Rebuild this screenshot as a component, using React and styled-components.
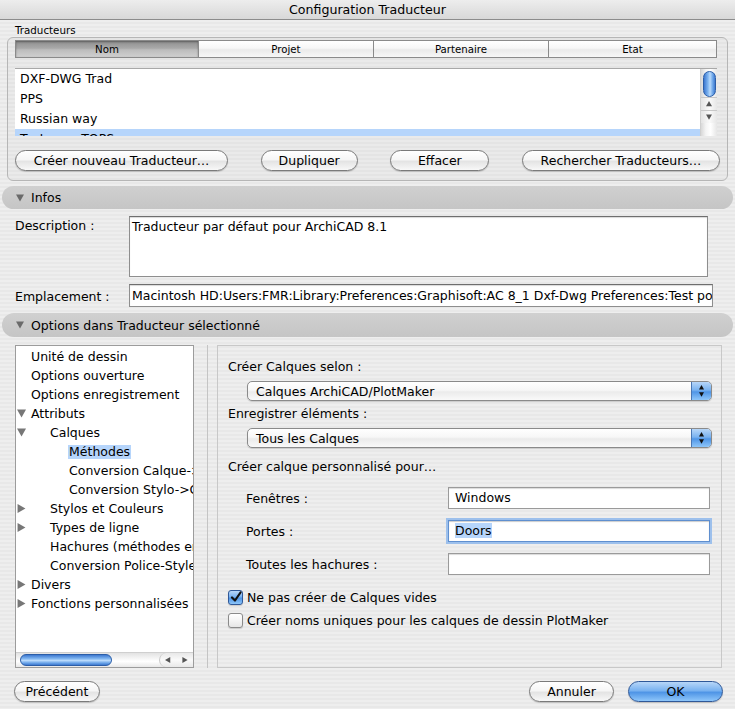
import styled, { createGlobalStyle } from 'styled-components';

const GlobalStyle = createGlobalStyle`
  html, body { margin: 0; padding: 0; }
  body {
    font-family: "DejaVu Sans", "Liberation Sans", sans-serif;
    font-size: 12.5px;
    color: #000;
    background: #ececec;
  }
  * { box-sizing: border-box; }
`;

const Window = styled.div`
  width: 735px;
  height: 709px;
  display: flex;
  flex-direction: column;
  overflow: hidden;
  background: repeating-linear-gradient(to bottom, #eeeeee 0 2px, #e8e8e8 2px 4px);
`;

const TitleBar = styled.div`
  height: 20px;
  flex: none;
  display: flex;
  align-items: center;
  justify-content: center;
  padding-bottom: 1px;
  font-size: 12.6px;
  background: linear-gradient(#ededed, #d8d8d8);
  border-bottom: 1px solid #8c8c8c;
`;

const GroupLabel = styled.div`
  margin: 3px 0 0 15px;
  height: 14px;
  line-height: 14px;
  font-size: 10.3px;
`;

const GroupBox = styled.div`
  margin: 0 7px;
  height: 144px;
  flex: none;
  border: 1px solid #b6b6b6;
  border-radius: 6px;
  padding: 2px 10px 0 7px;
  display: flex;
  flex-direction: column;
  background: rgba(0, 0, 0, 0.015);
`;

const TableHeader = styled.div`
  display: flex;
  height: 18px;
  flex: none;
`;

const HeaderCell = styled.div`
  width: ${p => p.$w}px;
  height: 18px;
  display: flex;
  align-items: center;
  justify-content: center;
  font-size: 10.2px;
  border: 1px solid #8a8a8a;
  margin-left: -1px;
  &:first-child { margin-left: 0; }
  background: ${p => p.$selected
    ? 'linear-gradient(#8e8e8e, #a9a9a9 45%, #bcbcbc 55%, #cfcfcf)'
    : 'linear-gradient(#ffffff, #f6f6f6 45%, #eaeaea 55%, #f7f7f7)'};
  box-shadow: ${p => p.$selected ? 'inset 0 1px 2px rgba(0,0,0,0.35)' : 'none'};
`;

const ListBox = styled.div`
  margin-top: 10px;
  height: 68px;
  flex: none;
  display: flex;
  background: #fff;
  border-top: 1px solid #a8a8a8;
  overflow: hidden;
`;

const ListRows = styled.div`
  flex: 1;
  overflow: hidden;
`;

const ListRow = styled.div`
  height: 20px;
  line-height: 20px;
  padding-left: 5px;
  white-space: nowrap;
  background: ${p => (p.$selected ? '#b6d5fb' : 'transparent')};
`;

const VScroll = styled.div`
  width: 17px;
  flex: none;
  display: flex;
  flex-direction: column;
  align-items: center;
  background: linear-gradient(to right, #d8d8d8, #f4f4f4 30%, #ffffff 60%, #e6e6e6);
  border-left: 1px solid #cfcfcf;
`;

const VThumb = styled.div`
  margin-top: 2px;
  width: 13px;
  height: 26px;
  border-radius: 7px;
  border: 1px solid #2c5ea8;
  background: linear-gradient(to right, #3d78d0, #7db3ef 35%, #b9dafc 55%, #6aa4e8 80%, #3f79cf);
`;

const ArrowBox = styled.div`
  width: 17px;
  height: 13px;
  display: flex;
  align-items: center;
  justify-content: center;
  border-top: 1px solid #c8c8c8;
  background: linear-gradient(to right, #e4e4e4, #fafafa 50%, #e4e4e4);
  &:first-of-type { margin-top: auto; }
`;

const ButtonRow = styled.div`
  margin-top: 14px;
  margin-right: -3px;
  display: flex;
  justify-content: space-between;
`;

const AquaButton = styled.div`
  width: ${p => p.$w}px;
  height: 21px;
  flex: none;
  display: flex;
  align-items: center;
  justify-content: center;
  border-radius: 11px;
  border: 1px solid ${p => (p.$default ? '#2f5898' : '#7a7a7a')};
  background: ${p => p.$default
    ? 'linear-gradient(#b7d6f8, #79b2f0 45%, #4f95e6 55%, #8ec6fa)'
    : 'linear-gradient(#ffffff, #f6f6f6 45%, #e4e4e4 55%, #f8f8f8)'};
  box-shadow: 0 1px 1px rgba(0, 0, 0, 0.18);
  white-space: nowrap;
`;

const DisclosureBar = styled.div`
  margin: ${p => p.$top}px 2px 0;
  height: ${p => p.$h}px;
  flex: none;
  border-radius: 12px;
  background: linear-gradient(#d0d0d0, #c5c5c5);
  display: flex;
  align-items: center;
  padding-left: 14px;
  gap: 7px;
`;

const FieldRow = styled.div`
  margin-top: 7px;
  padding-left: 15px;
  display: flex;
  align-items: ${p => (p.$top ? 'flex-start' : 'center')};
`;

const FieldLabel = styled.div`
  width: ${p => p.$w}px;
  flex: none;
  padding-top: ${p => p.$pt || 0}px;
  white-space: nowrap;
`;

const TextBox = styled.div`
  width: ${p => p.$w}px;
  height: ${p => p.$h}px;
  flex: none;
  background: #fff;
  border: 1px solid #8e8e8e;
  border-top-color: #6e6e6e;
  box-shadow: inset 0 1px 1px rgba(0, 0, 0, 0.15);
  padding: ${p => (p.$multi ? '2px 2px' : '0 2px')};
  line-height: ${p => (p.$multi ? '16px' : `${p.$h - 2}px`)};
  white-space: nowrap;
  overflow: hidden;
`;

const Split = styled.div`
  margin-top: 8px;
  height: 323px;
  flex: none;
  padding-left: 15px;
  display: flex;
`;

const TreePanel = styled.div`
  width: 179px;
  flex: none;
  background: #fff;
  border: 1px solid #9c9c9c;
  display: flex;
  flex-direction: column;
  padding-top: 1px;
  overflow: hidden;
`;

const TreeRow = styled.div`
  height: 19px;
  display: flex;
  align-items: center;
  white-space: nowrap;
`;

const Twisty = styled.div`
  width: 13px;
  flex: none;
  display: flex;
  justify-content: flex-start;
  margin-left: 1px;
`;

const TreeText = styled.span`
  margin-left: ${p => p.$level * 19}px;
  padding: 0 1px;
  margin-right: -1px;
  line-height: 14px;
  background: ${p => (p.$selected ? '#b6d5fb' : 'transparent')};
`;

const HScroll = styled.div`
  margin-top: auto;
  height: 15px;
  display: flex;
  align-items: center;
  background: linear-gradient(#e2e2e2, #f6f6f6 40%, #ffffff 60%, #e8e8e8);
  border-top: 1px solid #cfcfcf;
`;

const HThumb = styled.div`
  margin-left: 4px;
  width: 92px;
  height: 12px;
  border-radius: 7px;
  border: 1px solid #2c5ea8;
  background: linear-gradient(#3d78d0, #7db3ef 35%, #b9dafc 55%, #6aa4e8 80%, #3f79cf);
`;

const HArrows = styled.div`
  margin-left: auto;
  width: 34px;
  height: 14px;
  display: flex;
  align-items: center;
  justify-content: space-around;
  border-left: 1px solid #c8c8c8;
  border-radius: 7px 0 0 7px;
  background: linear-gradient(#e8e8e8, #fafafa 50%, #e8e8e8);
`;

const Splitter = styled.div`
  width: 14px;
  flex: none;
  border-right: 1px solid #c4c4c4;
`;

const OptionsBox = styled.div`
  margin-left: 9px;
  width: 505px;
  flex: none;
  border: 1px solid #c8c8c8;
  padding: 0 9px 0 10px;
  display: flex;
  flex-direction: column;
`;

const OptLabel = styled.div`
  margin-top: ${p => p.$mt}px;
  height: 16px;
  line-height: 16px;
  white-space: nowrap;
`;

const Popup = styled.div`
  margin: 6px 0 0 19px;
  height: 20px;
  display: flex;
  align-items: center;
  border: 1px solid #8a8a8a;
  border-radius: 5px;
  background: linear-gradient(#ffffff, #f7f7f7 45%, #ebebeb 55%, #f9f9f9);
  box-shadow: 0 1px 1px rgba(0, 0, 0, 0.15);
  overflow: hidden;
`;

const PopupText = styled.div`
  flex: 1;
  padding-left: 8px;
  white-space: nowrap;
`;

const PopupArrows = styled.div`
  width: 20px;
  height: 100%;
  display: flex;
  flex-direction: column;
  align-items: center;
  justify-content: center;
  gap: 2px;
  border-left: 1px solid #4a77b4;
  background: linear-gradient(#b7d6f8, #79b2f0 45%, #4f95e6 55%, #8ec6fa);
`;

const InputRow = styled.div`
  margin-top: ${p => p.$mt}px;
  padding-left: 18px;
  display: flex;
  align-items: center;
`;

const Input = styled.div`
  width: 262px;
  height: 22px;
  line-height: 20px;
  padding: 0 6px;
  background: #fff;
  border: 1px solid ${p => (p.$focused ? '#5f8fcf' : '#9a9a9a')};
  box-shadow: ${p => p.$focused
    ? '0 0 0 2px #9dc0ec, inset 0 1px 1px rgba(0,0,0,0.2)'
    : 'inset 0 1px 1px rgba(0,0,0,0.15)'};
  white-space: nowrap;
`;

const Selection = styled.span`
  background: #b6d5fb;
`;

const CheckRow = styled.div`
  margin-top: ${p => p.$mt}px;
  height: 16px;
  display: flex;
  align-items: center;
  gap: 4px;
  white-space: nowrap;
`;

const CheckBox = styled.div`
  width: 15px;
  height: 15px;
  flex: none;
  border-radius: 3px;
  border: 1px solid ${p => (p.$checked ? '#2f5898' : '#8a8a8a')};
  background: ${p => p.$checked
    ? 'linear-gradient(#b7d6f8, #79b2f0 45%, #4f95e6 55%, #8ec6fa)'
    : 'linear-gradient(#ffffff, #f4f4f4 50%, #e6e6e6)'};
  display: flex;
  align-items: center;
  justify-content: center;
  box-shadow: 0 1px 1px rgba(0, 0, 0, 0.15);
`;

const Footer = styled.div`
  margin-top: 13px;
  padding: 0 12px 0 14px;
  display: flex;
  gap: 14px;
`;

const Spacer = styled.div`
  flex: 1;
`;

const Tri = ({ dir = 'down', size = 8, color = '#6a6a6a' }) => {
  const pts = {
    down: '0,0.5 8,0.5 4,7.5',
    right: '0.5,0 7.5,4 0.5,8',
    up: '0,7 8,7 4,0',
    left: '7,0 0,4 7,8',
  }[dir];
  return (
    <svg width={size} height={size} viewBox="0 0 8 8" style={{ display: 'block' }}>
      <polygon points={pts} fill={color} />
    </svg>
  );
};

const Check = () => (
  <svg width="12" height="12" viewBox="0 0 12 12">
    <path d="M2 6.5 L5 9.5 L10.5 1.5" fill="none" stroke="#111" strokeWidth="2.2" strokeLinecap="round" strokeLinejoin="round" />
  </svg>
);

const columns = [
  { label: 'Nom', w: 184, selected: true },
  { label: 'Projet', w: 176 },
  { label: 'Partenaire', w: 176 },
  { label: 'Etat', w: 169 },
];

const translators = ['DXF-DWG Trad', 'PPS', 'Russian way', 'Test pour TOPS'];

const tree = [
  { label: 'Unité de dessin', level: 0 },
  { label: 'Options ouverture', level: 0 },
  { label: 'Options enregistrement', level: 0 },
  { label: 'Attributs', level: 0, twisty: 'down' },
  { label: 'Calques', level: 1, twisty: 'down' },
  { label: 'Méthodes', level: 2, selected: true },
  { label: 'Conversion Calque->Couche', level: 2 },
  { label: 'Conversion Stylo->Couleur', level: 2 },
  { label: 'Stylos et Couleurs', level: 1, twisty: 'right' },
  { label: 'Types de ligne', level: 1, twisty: 'right' },
  { label: 'Hachures (méthodes en DXF)', level: 1 },
  { label: 'Conversion Police-Style', level: 1 },
  { label: 'Divers', level: 0, twisty: 'right' },
  { label: 'Fonctions personnalisées', level: 0, twisty: 'right' },
];

export default function App() {
  return (
    <>
      <GlobalStyle />
      <Window>
        <TitleBar>Configuration Traducteur</TitleBar>

        <GroupLabel>Traducteurs</GroupLabel>
        <GroupBox>
          <TableHeader>
            {columns.map(c => (
              <HeaderCell key={c.label} $w={c.w} $selected={c.selected}>{c.label}</HeaderCell>
            ))}
          </TableHeader>
          <ListBox>
            <ListRows>
              {translators.map((t, i) => (
                <ListRow key={t} $selected={i === 3}>{t}</ListRow>
              ))}
            </ListRows>
            <VScroll>
              <VThumb />
              <ArrowBox><Tri dir="up" size={6} color="#555" /></ArrowBox>
              <ArrowBox><Tri dir="down" size={6} color="#555" /></ArrowBox>
            </VScroll>
          </ListBox>
          <ButtonRow>
            <AquaButton $w={213}>Créer nouveau Traducteur…</AquaButton>
            <AquaButton $w={97}>Dupliquer</AquaButton>
            <AquaButton $w={99}>Effacer</AquaButton>
            <AquaButton $w={198}>Rechercher Traducteurs…</AquaButton>
          </ButtonRow>
        </GroupBox>

        <DisclosureBar $top={5} $h={23}>
          <Tri dir="down" />
          <span>Infos</span>
        </DisclosureBar>

        <FieldRow $top>
          <FieldLabel $w={114} $pt={2}>Description :</FieldLabel>
          <TextBox $w={579} $h={61} $multi>Traducteur par défaut pour ArchiCAD 8.1</TextBox>
        </FieldRow>
        <FieldRow>
          <FieldLabel $w={114} $pt={2}>Emplacement :</FieldLabel>
          <TextBox $w={584} $h={23}>
            Macintosh HD:Users:FMR:Library:Preferences:Graphisoft:AC 8_1 Dxf-Dwg Preferences:Test pour TOPS
          </TextBox>
        </FieldRow>

        <DisclosureBar $top={6} $h={24}>
          <Tri dir="down" />
          <span>Options dans Traducteur sélectionné</span>
        </DisclosureBar>

        <Split>
          <TreePanel>
            {tree.map(n => (
              <TreeRow key={n.label}>
                <Twisty>{n.twisty && <Tri dir={n.twisty} size={9} color="#777" />}</Twisty>
                <TreeText $level={n.level} $selected={n.selected}>{n.label}</TreeText>
              </TreeRow>
            ))}
            <HScroll>
              <HThumb />
              <HArrows>
                <Tri dir="left" size={6} color="#555" />
                <Tri dir="right" size={6} color="#555" />
              </HArrows>
            </HScroll>
          </TreePanel>
          <Splitter />
          <OptionsBox>
            <OptLabel $mt={13}>Créer Calques selon :</OptLabel>
            <Popup>
              <PopupText>Calques ArchiCAD/PlotMaker</PopupText>
              <PopupArrows>
                <Tri dir="up" size={5} color="#111" />
                <Tri dir="down" size={5} color="#111" />
              </PopupArrows>
            </Popup>
            <OptLabel $mt={5}>Enregistrer éléments :</OptLabel>
            <Popup>
              <PopupText>Tous les Calques</PopupText>
              <PopupArrows>
                <Tri dir="up" size={5} color="#111" />
                <Tri dir="down" size={5} color="#111" />
              </PopupArrows>
            </Popup>
            <OptLabel $mt={11}>Créer calque personnalisé pour…</OptLabel>
            <InputRow $mt={12}>
              <FieldLabel $w={202}>Fenêtres :</FieldLabel>
              <Input>Windows</Input>
            </InputRow>
            <InputRow $mt={11}>
              <FieldLabel $w={202}>Portes :</FieldLabel>
              <Input $focused><Selection>Doors</Selection></Input>
            </InputRow>
            <InputRow $mt={11}>
              <FieldLabel $w={202}>Toutes les hachures :</FieldLabel>
              <Input />
            </InputRow>
            <CheckRow $mt={14}>
              <CheckBox $checked><Check /></CheckBox>
              Ne pas créer de Calques vides
            </CheckRow>
            <CheckRow $mt={7}>
              <CheckBox />
              Créer noms uniques pour les calques de dessin PlotMaker
            </CheckRow>
          </OptionsBox>
        </Split>

        <Footer>
          <AquaButton $w={86}>Précédent</AquaButton>
          <Spacer />
          <AquaButton $w={85}>Annuler</AquaButton>
          <AquaButton $w={95} $default>OK</AquaButton>
        </Footer>
      </Window>
    </>
  );
}
